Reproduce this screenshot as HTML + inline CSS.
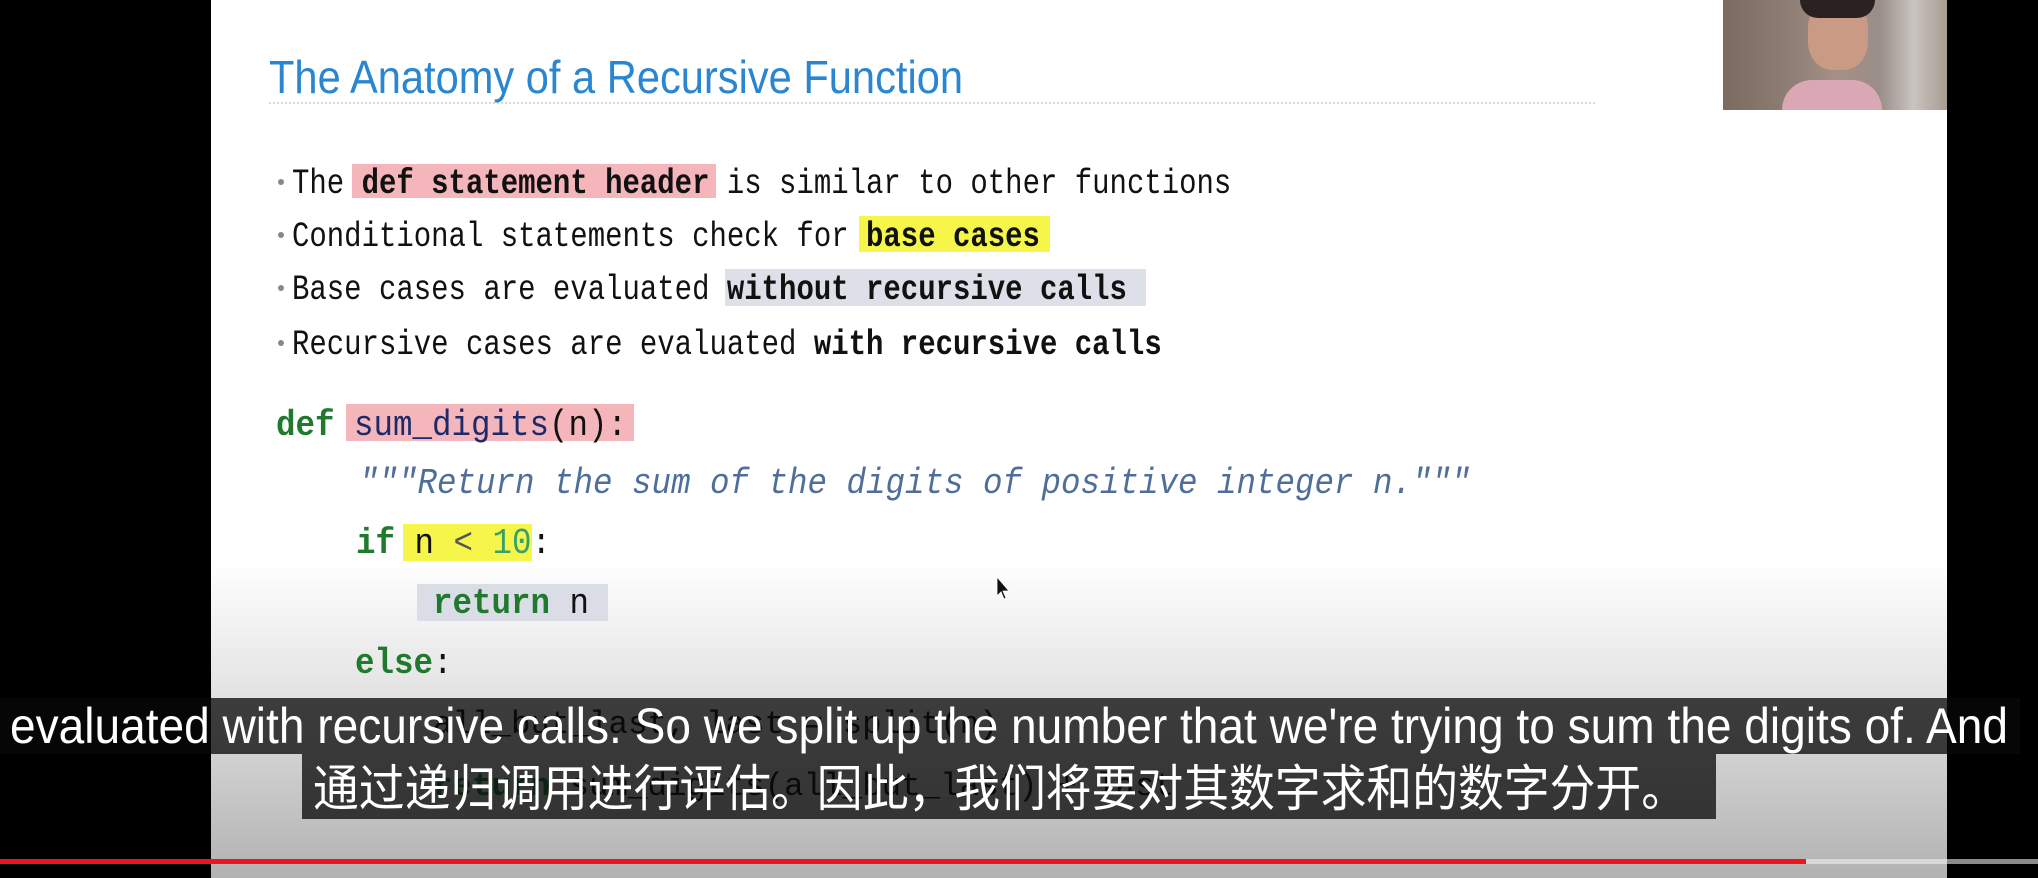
<!DOCTYPE html>
<html><head><meta charset="utf-8"><style>
html,body{margin:0;padding:0;background:#000;width:2038px;height:878px;overflow:hidden;position:relative}
.abs{position:absolute}
</style></head><body>
<div class="abs" style="left:211px;top:0;width:1736px;height:878px;background:linear-gradient(to bottom,#fff 0px,#fff 560px,#e6e6e6 680px,#c8c8c8 790px,#b2b2b2 878px)"></div>
<div class="abs" style="left:1723px;top:0;width:224px;height:110px;background:linear-gradient(to right,#7a6a60 0%,#8e7e74 30%,#a58f86 50%,#9a8e88 70%,#c8c4c0 85%,#a89c90 100%)"></div>
<div class="abs" style="left:1808px;top:0;width:60px;height:70px;border-radius:40%;background:#c99b85"></div>
<div class="abs" style="left:1800px;top:0;width:75px;height:18px;background:#2a2220;border-radius:0 0 30px 30px"></div>
<div class="abs" style="left:1782px;top:80px;width:100px;height:30px;background:#d9a8b4;border-radius:30px 30px 0 0"></div>
<svg class="abs" style="left:0;top:0" width="2038" height="878" xmlns="http://www.w3.org/2000/svg">
<line x1="269" y1="103" x2="1596" y2="103" stroke="#ccc" stroke-width="1.5" stroke-dasharray="2,2"/>
<text x="269" y="93" font-family="Liberation Sans, sans-serif" font-size="46" fill="#2a86d0" textLength="694" lengthAdjust="spacingAndGlyphs">The Anatomy of a Recursive Function</text>
<rect x="352" y="164" width="364" height="34" fill="#f4b6bb"/>
<rect x="859" y="216" width="191" height="36" fill="#f5f54a"/>
<rect x="725" y="269" width="421" height="37" fill="#dde0e8"/>
<g font-family="Liberation Mono, monospace" font-size="29" fill="#111" xml:space="preserve">
<text transform="translate(292,193) scale(1,1.2)">The <tspan font-weight="bold">def statement header</tspan> is similar to other functions</text>
<text transform="translate(292,246) scale(1,1.2)">Conditional statements check for <tspan font-weight="bold">base cases</tspan></text>
<text transform="translate(292,299) scale(1,1.2)">Base cases are evaluated <tspan font-weight="bold">without recursive calls</tspan></text>
<text transform="translate(292,354) scale(1,1.2)">Recursive cases are evaluated <tspan font-weight="bold">with recursive calls</tspan></text>
</g>
<g fill="#888"><circle cx="281" cy="182" r="3"/><circle cx="281" cy="235" r="3"/><circle cx="281" cy="288" r="3"/><circle cx="281" cy="343" r="3"/></g>
<rect x="346" y="404" width="288" height="37" fill="#f4b6bb"/>
<rect x="403" y="524" width="129" height="37" fill="#f5f54a"/>
<rect x="417" y="584" width="191" height="37" fill="#dbdde6"/>
<g font-family="Liberation Mono, monospace" font-size="32.5" xml:space="preserve">
<text transform="translate(276,435) scale(1,1.1)"><tspan fill="#1f7a2e" font-weight="bold">def</tspan> <tspan fill="#1a2a6a">sum_digits</tspan><tspan fill="#111">(n):</tspan></text>
<text transform="translate(359,493) scale(1,1.1)" fill="#4f6f9a" font-style="italic">"""Return the sum of the digits of positive integer n."""</text>
<text transform="translate(356,553) scale(1,1.1)"><tspan fill="#1f7a2e" font-weight="bold">if</tspan> <tspan fill="#111">n </tspan><tspan fill="#555">&lt;</tspan> <tspan fill="#3aa06a">10</tspan><tspan fill="#111">:</tspan></text>
<text transform="translate(433,613) scale(1,1.1)"><tspan fill="#1f7a2e" font-weight="bold">return</tspan> <tspan fill="#111">n</tspan></text>
<text transform="translate(355,673) scale(1,1.1)"><tspan fill="#1f7a2e" font-weight="bold">else</tspan><tspan fill="#111">:</tspan></text>
<text x="433" y="733" fill="#111">all_but_last, last = split(n)</text>
<text x="433" y="795"><tspan fill="#1f7a2e" font-weight="bold">return</tspan><tspan fill="#111"> sum_digits(all_but_last) + last</tspan></text>
</g>
<path d="M997 577 L997 596 L1001 592 L1004 599 L1006 598 L1003 591 L1009 591 Z" fill="#111" stroke="#fff" stroke-width="0.8"/>
<rect x="0" y="698" width="2020" height="56" fill="rgba(8,8,8,0.76)"/>
<rect x="302" y="754" width="1414" height="65" fill="rgba(8,8,8,0.76)"/>
<text x="10" y="743" font-family="Liberation Sans, sans-serif" font-size="50" fill="#fff" textLength="1998" lengthAdjust="spacingAndGlyphs">evaluated with recursive calls. So we split up the number that we're trying to sum the digits of. And</text>
<text x="313" y="806" font-family="Liberation Sans, 'Noto Sans CJK SC', sans-serif" font-size="50" fill="#fff" textLength="1374" lengthAdjust="spacingAndGlyphs">通过递归调用进行评估。因此，我们将要对其数字求和的数字分开。</text>
<rect x="0" y="859" width="1806" height="5" fill="#f0141e"/>
<rect x="1806" y="859" width="141" height="5" fill="#d8d8d8"/>
<rect x="1947" y="859" width="91" height="5" fill="#8a8a8a"/>
</svg>
</body></html>
